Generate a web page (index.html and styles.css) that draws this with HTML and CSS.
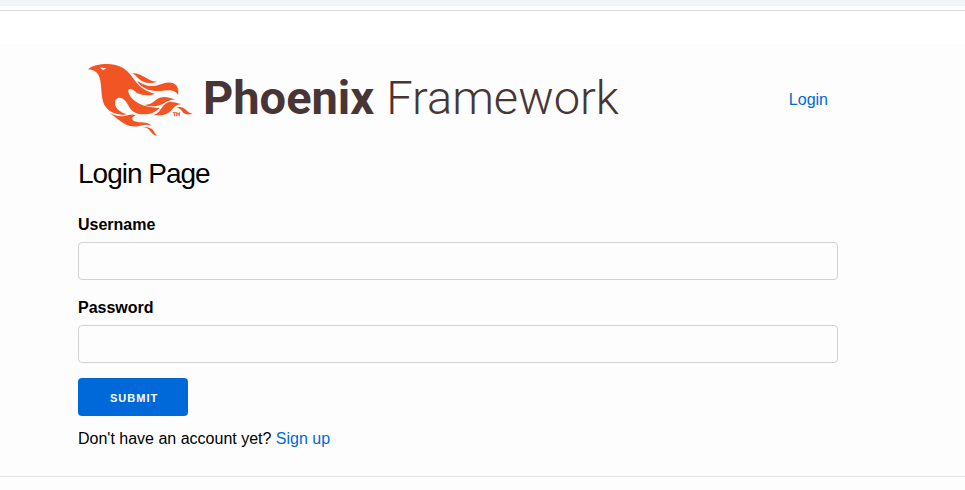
FILE: index.html
```html
<!DOCTYPE html>
<html lang="en">
<head>
<meta charset="utf-8">
<meta name="viewport" content="width=device-width, initial-scale=1">
<title>Login Page</title>
<link rel="stylesheet" href="styles.css">
</head>
<body>
<div class="topbar"></div>
<div class="page">
  <header class="header">
    <a class="logo" href="#">
      <svg class="bird" viewBox="0 0 360 270" aria-hidden="true">
        <g fill="#f15524">
          <path d="M24 43C36 31 58 27 82 27C112 27 132 38 147 54C166 75 178 106 225 116C207 124 188 121 171 114C158 102 143 97 145 110C149 130 178 158 239 158C225 175 199 181 174 176C151 171 147 152 137 139C121 120 104 129 105 145C106 163 123 173 141 178C116 182 91 174 78 157C62 136 66 105 61 77C57 55 45 44 24 43Z"/>
          <path d="M155 55C188 53 200 79 231 80C211 88 190 84 178 73C170 66 165 58 155 55Z"/>
          <path d="M171 77C188 88 204 96 228 92C247 87 274 74 290 92C295 101 296 111 294 119C282 100 261 106 240 108C211 109 187 102 171 77Z"/>
          <path d="M192 150C225 149 224 127 252 126C265 126 275 131 287 133C257 135 254 149 230 153C216 155 204 153 192 150Z"/>
          <path d="M220 181C249 170 243 145 270 141C283 140 293 145 304 147C276 151 279 169 259 177C246 182 233 181 220 181Z"/>
          <path d="M289 158C299 154 308 156 315 162C322 168 327 175 338 176C328 179 318 179 311 175C305 165 300 159 289 158Z"/>
          <path d="M87 173C105 181 116 186 133 183C149 180 156 175 168 182C155 182 153 194 164 199C180 205 201 199 215 212C201 207 191 209 180 212C157 219 137 211 122 199C109 188 100 181 87 173Z"/>
          <path d="M188 216C202 215 211 217 218 224C224 230 225 239 234 243C222 242 217 237 211 229C205 221 200 217 188 216Z"/>
          <path d="M279 172h8v2h-3v9h-2v-9h-3zM289 172h2l3 6l3-6h2v11h-2v-7l-3 5l-3-5v7h-2z" stroke="#f15524"/>
        </g>
        <path d="M61 37Q69 41 78 38Q76 46 67 44Q63 42 61 37Z" fill="#fdfdfd"/>
      </svg>
      <span class="wordmark"><b>Phoenix</b> <span>Framework</span></span>
    </a>
    <nav><a href="#">Login</a></nav>
  </header>
  <main>
    <h2>Login Page</h2>
    <form>
      <label for="username">Username</label>
      <input id="username" type="text">
      <label for="password">Password</label>
      <input id="password" type="password">
      <button type="button">Submit</button>
    </form>
    <p>Don't have an account yet? <a href="#">Sign up</a></p>
  </main>
</div>
<footer></footer>
</body>
</html>
```
FILE: styles.css
```css
* { box-sizing: border-box; }
body {
  margin: 0;
  background: #fdfdfd;
  color: #000;
  font: 16px/24px "Liberation Sans", Arial, sans-serif;
}
a { color: #0069d9; text-decoration: none; }
.topbar {
  height: 44px;
  background: linear-gradient(#f1f3f4 6px, #fff 6px, #fff 10px, #dadada 10px, #dadada 11px, #fff 11px);
}
.page { padding: 11px 127px 25px 78px; }
.header {
  display: flex;
  align-items: center;
  justify-content: space-between;
  padding-right: 10px;
}
.logo { display: flex; align-items: center; color: #483637; }
.bird { width: 120px; height: 90px; margin-left: 2px; }
.wordmark {
  display: flex;
  gap: 12px;
  padding: 0 0 4px 3px;
  font: 300 47px/60px Roboto, sans-serif;
}
.wordmark b { font-weight: 700; }
h2 {
  margin: 11px 0 21px;
  font-size: 28px;
  line-height: 36px;
  font-weight: 400;
  letter-spacing: -1px;
}
form { display: flex; flex-direction: column; align-items: flex-start; }
label { margin-bottom: 5px; font-weight: 700; }
input {
  width: 100%;
  height: 38px;
  margin-bottom: 16px;
  padding: 6px 10px;
  border: 1px solid #d1d1d1;
  border-radius: 4px;
  background: transparent;
  font: inherit;
}
#password { margin-bottom: 15px; }
button {
  height: 38px;
  margin-bottom: 11px;
  padding: 1px 30px 0 32px;
  border: 0;
  border-radius: 4px;
  background: #0069d9;
  color: #fff;
  font: 700 11px/38px "Liberation Sans", Arial, sans-serif;
  letter-spacing: 1px;
  text-transform: uppercase;
}
p { margin: 0; }
footer { border-top: 1px solid #e6e6e6; }
```
